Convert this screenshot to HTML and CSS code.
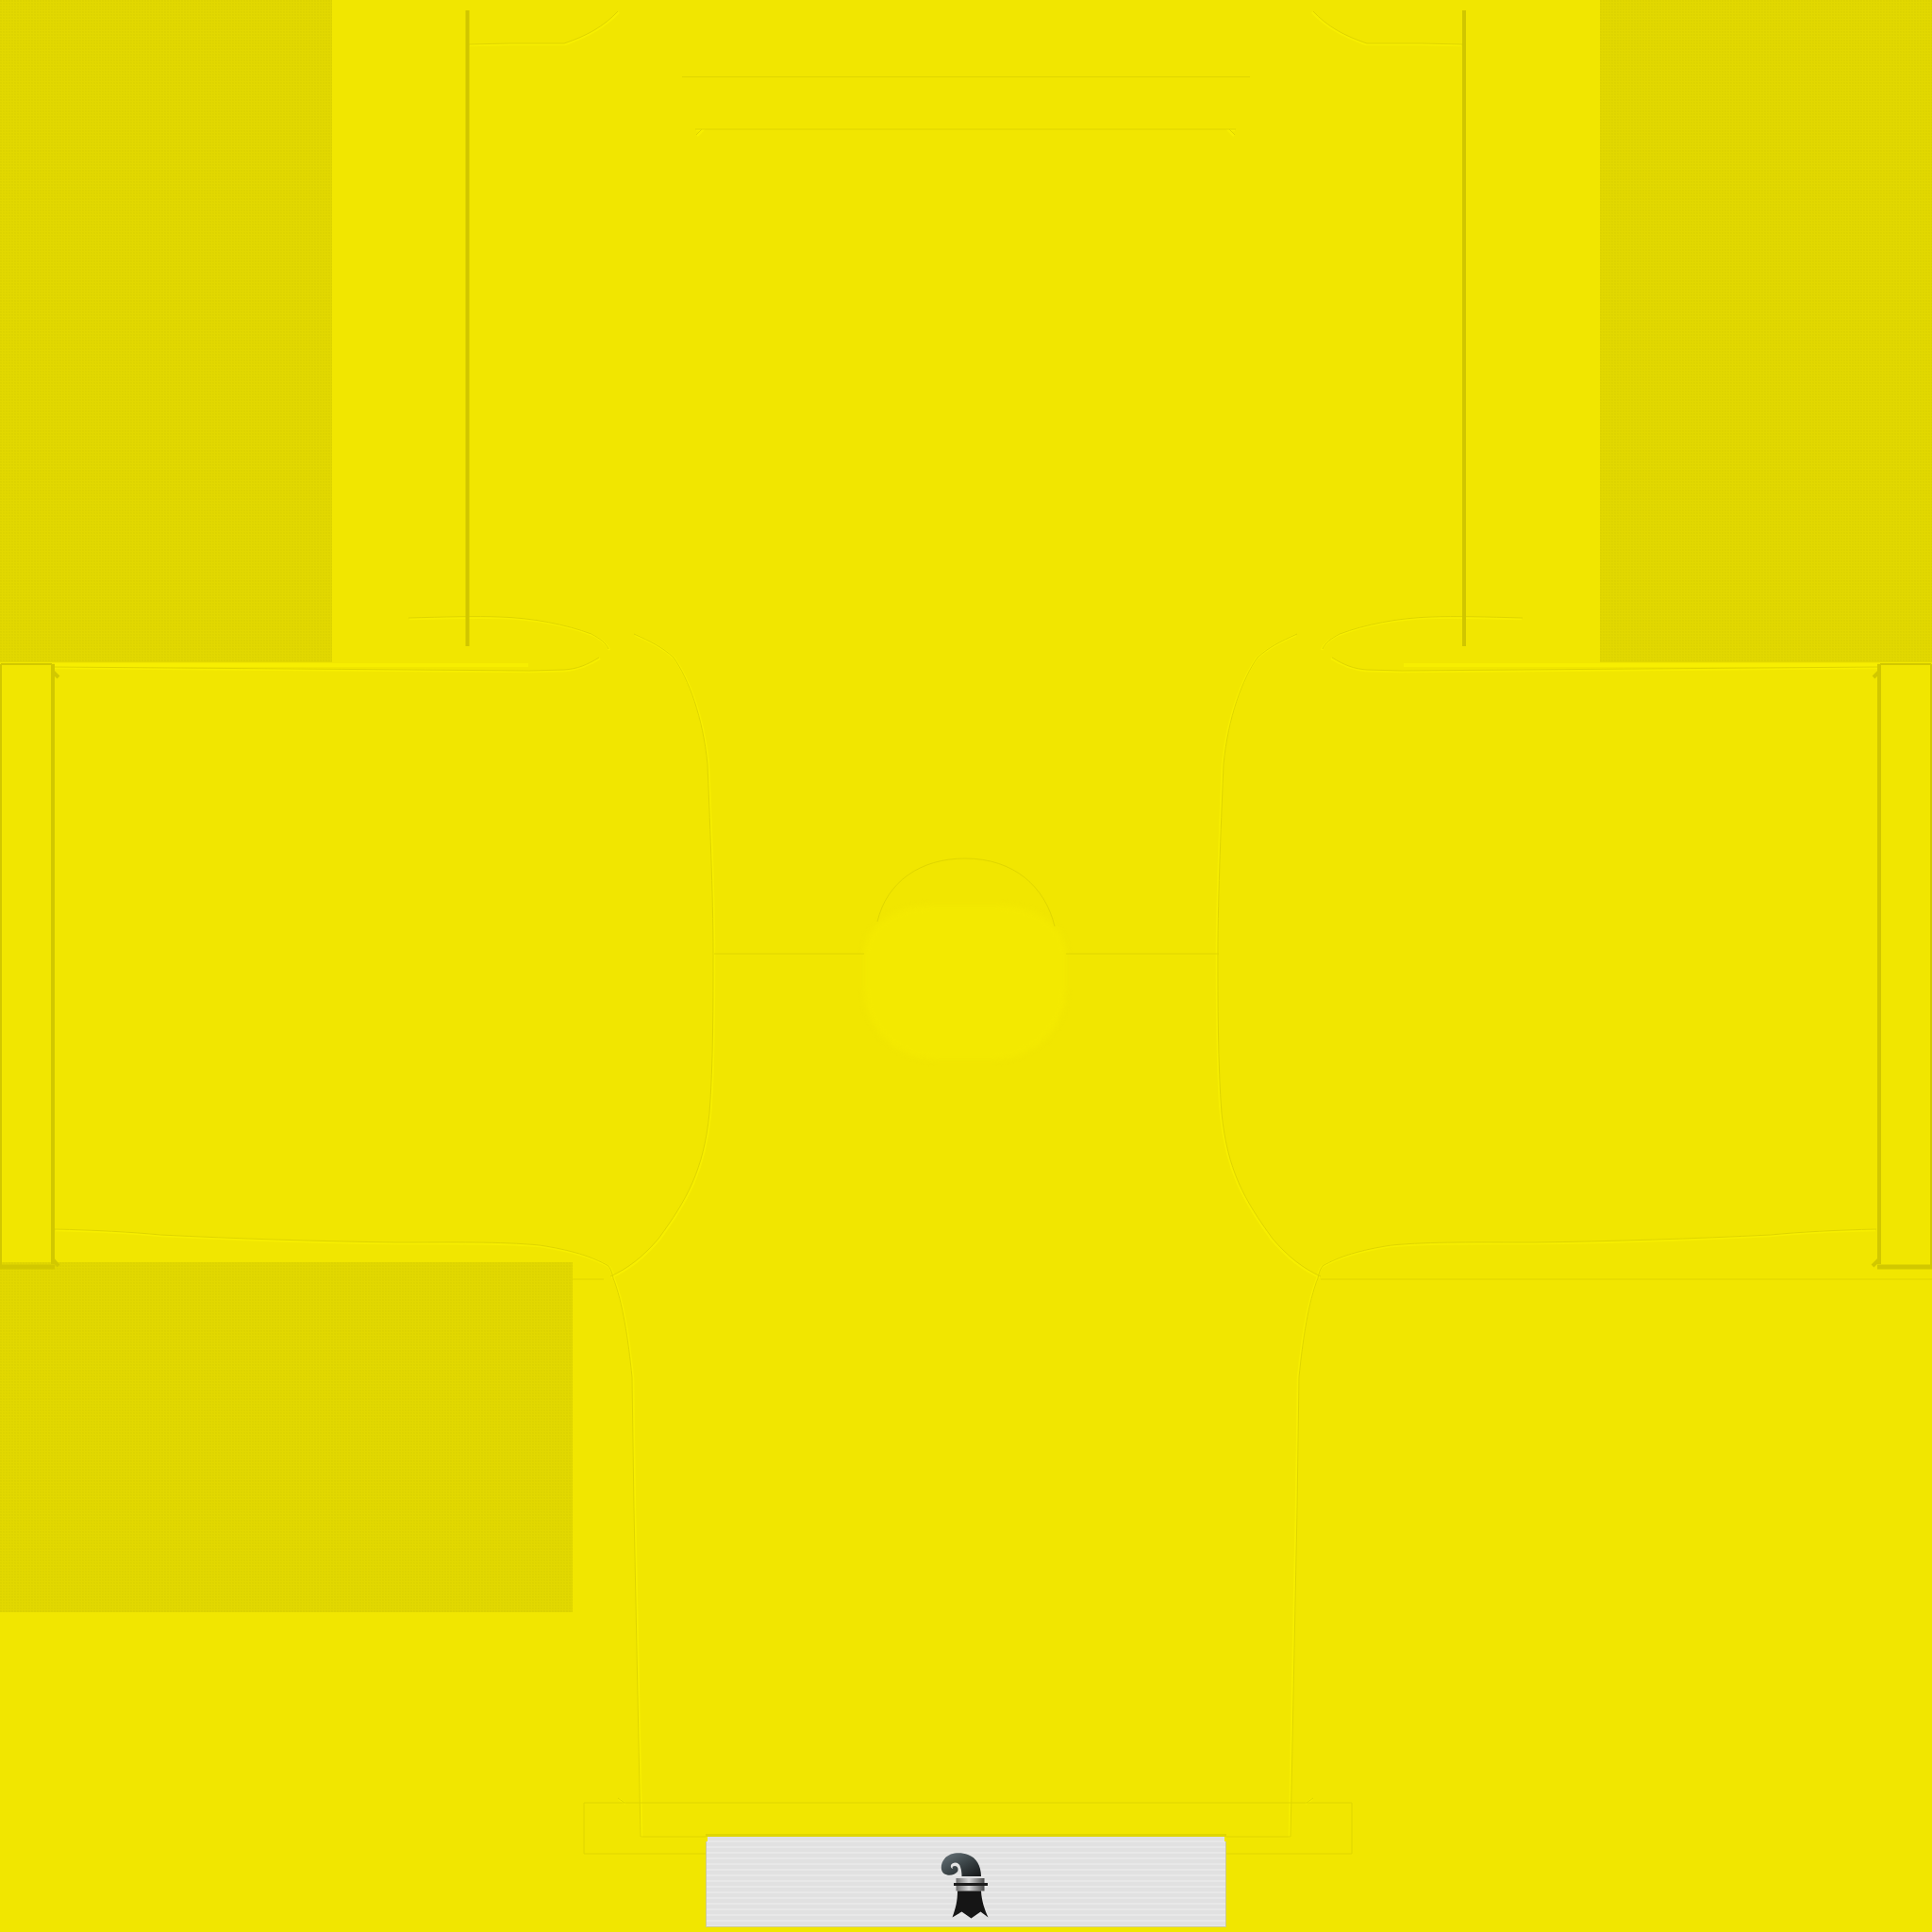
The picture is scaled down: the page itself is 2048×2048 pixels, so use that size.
FILE: index.html
```html
<!DOCTYPE html>
<html lang="en">
<head>
<meta charset="utf-8">
<title>Kit texture</title>
<link rel="stylesheet" href="styles.css">
</head>
<body>
<main class="canvas">
  <div class="panel panel-tl"></div>
  <div class="panel panel-tr"></div>
  <div class="panel panel-bl"></div>
  <div class="neck-glow"></div>

  <svg class="seams" viewBox="0 0 2048 2048" width="2048" height="2048" aria-hidden="true">
    <defs>
      <g id="half">
        <path d="M497 47 L540 46 L598 46 C622 38 640 28 655 12"/>
        <path d="M433 655 C470 654 505 653 530 654 C565 655 600 662 627 672 C636 677 642 681 645 688"/>
        <path d="M635 697 C622 705 612 709 598 710 L561 711 L56 707"/>
        <path d="M672 672 C690 680 702 686 714 697 C730 720 745 760 750 810 C752 860 756 950 756 1010 C756 1060 756 1130 752 1180 C746 1240 728 1272 698 1313 C682 1332 665 1345 647 1353"/>
        <path d="M58 1303 C100 1304 140 1306 170 1309 C250 1313 340 1316 422 1317 C480 1317 530 1316 572 1320 C605 1325 628 1332 645 1342 C648 1346 649 1350 650 1355 C660 1380 666 1420 670 1460 L672 1600 L679 1947"/>
        <path d="M737 137 L744 137 L738 143"/>
        <path d="M655 1906 L662 1911"/>
      </g>
    </defs>

    <g class="seam-light">
      <use href="#half" x="1" y="1"/>
      <use href="#half" transform="translate(2046 1) scale(-1 1)"/>
      <path class="cuff-top" d="M58 705 H560 M1488 705 H1990"/>
    </g>
    <g class="seam-dark">
      <use href="#half"/>
      <use href="#half" transform="translate(2047 0) scale(-1 1)"/>
    </g>

    <g class="stitch">
      <line x1="723" y1="81.5" x2="1325" y2="81.5"/>
      <line x1="744" y1="137" x2="1303" y2="137"/>
      <line x1="606" y1="1356" x2="640" y2="1356"/>
      <line x1="179" y1="1356" x2="431" y2="1356"/>
      <line x1="0" y1="1356" x2="8" y2="1356"/>
      <line x1="1400" y1="1356" x2="2048" y2="1356"/>
      <line x1="757" y1="1011" x2="916" y2="1011"/>
      <line x1="1130" y1="1011" x2="1292" y2="1011"/>
      <path d="M619 1911 H1433 V1965 H619 Z"/>
      <path d="M679 1947 H748 M1300 1947 H1368"/>
      <path d="M930 977 C940 935 975 910 1023 910 C1075 910 1108 940 1118 982"/>
    </g>

    <g class="bar">
      <line x1="495.5" y1="11" x2="495.5" y2="685"/>
      <line x1="1552" y1="11" x2="1552" y2="685"/>
    </g>

    <g class="strip">
      <path class="thin" d="M1 704 V1343 M1 704 H55 M2047 704 V1343 M1993 704 H2047"/>
      <path d="M56 704 V1340 M1992 704 V1340"/>
      <path d="M56 712 L62 718 M56 1335 L62 1342 M1992 712 L1986 718 M1992 1335 L1985 1342"/>
      <path class="cuff" d="M0 1343 H58 M1990 1343 H2048"/>
    </g>
  </svg>

  <div class="label">
    <svg class="crozier" viewBox="0 0 120 100" width="120" height="100" role="img" aria-label="Basel crest">
      <defs>
        <linearGradient id="hook" x1="0" y1="0" x2="1" y2="1">
          <stop offset="0" stop-color="#6a767c"/>
          <stop offset="0.5" stop-color="#3d4649"/>
          <stop offset="1" stop-color="#141617"/>
        </linearGradient>
        <linearGradient id="ring" x1="0" y1="0" x2="1" y2="0">
          <stop offset="0" stop-color="#6f6f6f"/>
          <stop offset=".45" stop-color="#d6d6d6"/>
          <stop offset="1" stop-color="#4a4a4a"/>
        </linearGradient>
      </defs>
      <path fill="url(#hook)" d="M80 44 C80 33 75 24 66 21 C58 18 47 18.500 41.500 25 C37 30 36.500 38 40.500 41 C45 44 52 43 55 39 C56.500 36 55 33 52 33 C50 33 49 34.500 50 36 C47.500 35.500 47 32 49.500 30.500 C53 28.500 57 30 58 34 C59 37 59.500 40 59.500 44 Z"/>
      <rect x="53.500" y="46" width="30" height="13.500" fill="url(#ring)"/>
      <rect x="51" y="51" width="36" height="3" fill="#1c1c1c"/>
      <path fill="#151515" d="M55 59.500 H80 C80.500 70 84 80 87.500 87.500 L79.500 81.500 L69.500 88.500 L59.500 81.500 L49.500 87.500 C53 78 55 70 55 59.500 Z"/>
    </svg>
  </div>
</main>
</body>
</html>
```
FILE: styles.css
```css
html, body {
  margin: 0;
  padding: 0;
  background: #f1e600;
}

.canvas {
  position: relative;
  width: 2048px;
  height: 2048px;
  overflow: hidden;
  background: #f1e600;
}

.panel {
  position: absolute;
  background-color: #e2d800;
  background-image: radial-gradient(circle at 1px 1px, #ded400 0.7px, transparent 1px);
  background-size: 3px 3px;
}

.panel-tl { left: 0; top: 0; width: 352px; height: 702px; }
.panel-tr { left: 1696px; top: 0; width: 352px; height: 702px; }
.panel-bl { left: 0; top: 1338px; width: 607px; height: 371px; }

.neck-glow {
  position: absolute;
  left: 916px;
  top: 960px;
  width: 214px;
  height: 163px;
  border-radius: 70px 70px 75px 75px / 50px 50px 75px 75px;
  background: #f3e900;
  filter: blur(3px);
}

.seams {
  position: absolute;
  left: 0;
  top: 0;
  fill: none;
}

.seam-light { stroke: #f7ee00; stroke-width: 2.5; }
.seam-dark { stroke: #dfd500; stroke-width: 1; }
.cuff-top { stroke-width: 4; }
.stitch { stroke: #e0d600; stroke-width: 1; }
.bar { stroke: #d0c600; stroke-width: 4; }
.strip { stroke: #d2c800; stroke-width: 4; }
.strip .thin { stroke-width: 2; }
.strip .cuff { stroke-width: 5; }

.label {
  position: absolute;
  left: 748px;
  top: 1947px;
  width: 552px;
  height: 96px;
  box-sizing: border-box;
  border: 1px solid #cfcb8c;
  border-top: 0;
  display: flex;
  justify-content: center;
  background: repeating-linear-gradient(180deg, #e1e1e1 0 4px, #e8e8e8 4px 6px);
  box-shadow: 0 -3px 0 #e0d600;
}

.label::before,
.label::after {
  content: "";
  position: absolute;
  top: 0;
  width: 2px;
  height: 5px;
  background: #f1e600;
}

.label::before { left: -1px; }
.label::after { right: -1px; }

.crozier {
  flex: none;
  margin: -2px 0 0 -8px;
}
```
